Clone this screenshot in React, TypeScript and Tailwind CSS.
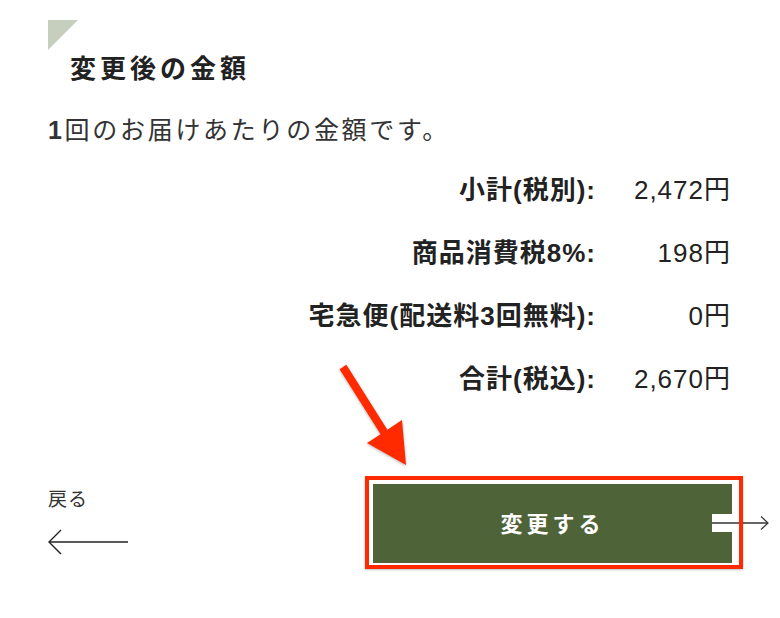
import React from "react";

const rows = [
  { label: "小計(税別):", value: "2,472円" },
  { label: "商品消費税8%:", value: "198円" },
  { label: "宅急便(配送料3回無料):", value: "0円" },
  { label: "合計(税込):", value: "2,670円" },
];

export default function App() {
  return (
    <div className="relative w-[780px] h-[618px] overflow-hidden bg-white font-['Liberation_Sans','Noto_Sans_CJK_JP',sans-serif] text-[#222]">
      <div className="flex flex-col pt-[20px]">
        <div className="pl-[48px]">
          <div className="w-[30px] h-[30px] bg-[#c6cfbd] [clip-path:polygon(0_0,100%_0,0_100%)]" />
        </div>
        <h2 className="pl-[70px] text-[26px] leading-[36px] font-bold tracking-[4px] font-['Noto_Sans_CJK_JP',sans-serif] text-[#222] -mt-[1px]">
          変更後の金額
        </h2>
        <p className="mt-[27px] pl-[48px] text-[25px] leading-[36px] tracking-[2.7px] text-[#333]">
          <span className="font-bold">1</span>回のお届けあたりの金額です。
        </p>
        <div className="mt-[10px] flex flex-col pr-[49px]">
          {rows.map((r) => (
            <div key={r.label} className="h-[63px] flex items-center justify-end">
              <span className="text-[26px] leading-[36px] font-bold tracking-[1px] text-[#222]">{r.label}</span>
              <span className="w-[135px] text-right text-[26px] leading-[36px] tracking-[1px] text-[#222]">{r.value}</span>
            </div>
          ))}
        </div>
        <div className="mt-[66px] flex items-start justify-between pl-[48px] pr-[37px]">
          <div className="flex flex-col pt-[11px]">
            <span className="text-[19px] leading-[26px] tracking-[1px] text-[#333]">戻る</span>
            <svg width="84" height="28" viewBox="0 0 84 28" className="mt-[15px] -ml-[1px]">
              <path d="M2 14 H81" stroke="#222" strokeWidth="1.6" fill="none" />
              <path d="M14 2 L2 14 L14 26" stroke="#222" strokeWidth="1.4" fill="none" />
            </svg>
          </div>
          <div className="relative w-[378px] h-[93px] pt-[8px] pl-[8px] pr-[11px] pb-[6px]">
            <button className="w-full h-full bg-[#4f6339] text-white text-[22px] font-bold tracking-[4px] font-['Noto_Sans_CJK_JP',sans-serif] flex items-center justify-center pb-[3px]">
              変更する
            </button>
            <div className="absolute left-[347px] top-[38px] w-[26px] h-[18px] bg-white" />
            <svg width="60" height="16" viewBox="0 0 60 16" className="absolute left-[347px] top-[39px] overflow-visible">
              <path d="M0 8 H56" stroke="#333" strokeWidth="1.3" fill="none" />
              <path d="M49 1.5 L56 8 L49 14.5" stroke="#333" strokeWidth="1.2" fill="none" />
            </svg>
            <div className="pointer-events-none absolute inset-0 border-4 border-[#ff2a00] shadow-[0_1px_2px_rgba(0,0,0,0.25)]" />
          </div>
        </div>
      </div>
      <svg
        className="pointer-events-none absolute left-0 top-0"
        width="780"
        height="618"
        viewBox="0 0 780 618"
      >
        <polygon
          points="346.4,364.8 387.4,429.8 402,420 406,465 367,443 380.6,434.2 339.6,369.2"
          fill="#ff2a00"
          style={{ filter: "drop-shadow(0px 1px 1.5px rgba(0,0,0,0.3))" }}
        />
      </svg>
    </div>
  );
}
